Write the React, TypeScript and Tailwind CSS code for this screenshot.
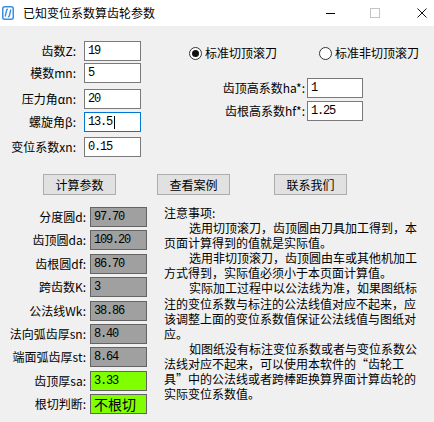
import React from "react";

const inputs = [
    { label: "齿数Z:", value: "19", mt: "mt-[15px]" },
    { label: "模数mn:", value: "5", mt: "mt-[2px]" },
    { label: "压力角αn:", value: "20", mt: "mt-[6px]" },
    { label: "螺旋角β:", value: "13.5", mt: "mt-[3px]", focus: true },
    { label: "变位系数xn:", value: "0.15", mt: "mt-[5px]" },
];

const outputs = [
    { label: "分度圆d:", value: "97.70" },
    { label: "齿顶圆da:", value: "109.20" },
    { label: "齿根圆df:", value: "86.70" },
    { label: "跨齿数K:", value: "3" },
    { label: "公法线Wk:", value: "38.86" },
    { label: "法向弧齿厚sn:", value: "8.40" },
    { label: "端面弧齿厚st:", value: "8.64" },
    { label: "齿顶厚sa:", value: "3.33", green: true },
    { label: "根切判断:", value: "不根切", green: true, cjk: true },
];

// each line of the notes, indent = paragraph start
const notes: { text: string; indent?: boolean }[] = [
    { text: "注意事项:" },
    { text: "选用切顶滚刀，齿顶圆由刀具加工得到，本", indent: true },
    { text: "页面计算得到的值就是实际值。" },
    { text: "选用非切顶滚刀，齿顶圆由车或其他机加工", indent: true },
    { text: "方式得到，实际值必须小于本页面计算值。" },
    { text: "实际加工过程中以公法线为准，如果图纸标", indent: true },
    { text: "注的变位系数与标注的公法线值对应不起来，应" },
    { text: "该调整上面的变位系数值保证公法线值与图纸对" },
    { text: "应。" },
    { text: "如图纸没有标注变位系数或者与变位系数公", indent: true },
    { text: "法线对应不起来，可以使用本软件的“齿轮工" },
    { text: "具”中的公法线或者跨棒距换算界面计算齿轮的" },
    { text: "实际变位系数值。" },
];

const mono = "font-['Liberation_Mono',monospace] text-[12px] tracking-[-1.2px]";

const Radio = ({ checked, label }: { checked?: boolean; label: string }) => (
    <div className="flex items-center">
        <div className="w-[13px] h-[13px] rounded-full border border-[#333] bg-white flex items-center justify-center">
            {checked && <div className="w-[7px] h-[7px] rounded-full bg-[#111]" />}
        </div>
        <span className="ml-[3px] text-[12px] leading-[16px]">{label}</span>
    </div>
);

const Btn = ({ label, className }: { label: string; className?: string }) => (
    <div className={`w-[73px] h-[21px] bg-[#e1e1e1] border border-[#adadad] flex items-center justify-center text-[12px] ${className ?? ""}`}>
        {label}
    </div>
);

export default function App() {
    return (
        <div className="w-[434px] h-[422px] overflow-hidden bg-[#f0f0f0] flex flex-col text-black font-['Noto_Sans_CJK_SC','Liberation_Sans',sans-serif]">
            {/* Title bar */}
            <div className="h-[26px] bg-white flex items-center shrink-0">
                <svg className="ml-[2px] mt-[-1px]" width="12" height="14" viewBox="0 0 12 14">
                    <rect x="0.75" y="0.75" width="10.5" height="12.5" rx="2" fill="#fff" stroke="#3a8ee6" strokeWidth="1.5" />
                    <path d="M3.2 10.5 L4.6 4.2 Q4.9 3.2 5.9 3.3" stroke="#3a8ee6" strokeWidth="1.4" fill="none" />
                    <path d="M6 10.7 Q7.1 10.8 7.4 9.8 L8.8 3.5" stroke="#3a8ee6" strokeWidth="1.4" fill="none" />
                </svg>
                <span className="ml-[9px] text-[12px] leading-[16px]">已知变位系数算齿轮参数</span>
                <div className="ml-auto w-[9px] h-px bg-black" />
                <div className="ml-[35px] w-[10px] h-[10px] border border-[#c4c4c4]" />
                <svg className="ml-[37px] mr-[7px]" width="10" height="10" viewBox="0 0 10 10">
                    <path d="M0.5 0.5 L9.5 9.5 M9.5 0.5 L0.5 9.5" stroke="#111" strokeWidth="1" />
                </svg>
            </div>

            {/* Input section */}
            <div className="h-[148px] flex shrink-0">
                <div className="flex flex-col">
                    {inputs.map(row => (
                        <div key={row.label} className={`flex items-center h-[20px] ${row.mt}`}>
                            <span className="w-[76px] text-right text-[12px] leading-[16px] whitespace-nowrap">{row.label}</span>
                            <div className={`ml-[8px] w-[57px] h-[20px] bg-white border flex items-center pl-[3px] ${row.focus ? "border-[#0078d7]" : "border-[#7a7a7a]"}`}>
                                <span className={mono}>{row.value}</span>
                                {row.focus && <div className="ml-[2px] w-px h-[13px] bg-black" />}
                            </div>
                        </div>
                    ))}
                </div>

                <div className="ml-[48px] flex flex-col">
                    <div className="mt-[19px] h-[16px] flex items-center">
                        <Radio checked label="标准切顶滚刀" />
                        <div className="ml-[42px]">
                            <Radio label="标准非切顶滚刀" />
                        </div>
                    </div>
                    <div className="mt-[17px] flex items-center h-[20px]">
                        <span className="w-[116px] text-right text-[12px] leading-[16px] whitespace-nowrap">齿顶高系数ha*:</span>
                        <div className="ml-[2px] w-[56px] h-[20px] bg-white border border-[#7a7a7a] flex items-center pl-[3px]">
                            <span className={mono}>1</span>
                        </div>
                    </div>
                    <div className="mt-[3px] flex items-center h-[20px]">
                        <span className="w-[116px] text-right text-[12px] leading-[16px] whitespace-nowrap">齿根高系数hf*:</span>
                        <div className="ml-[2px] w-[56px] h-[20px] bg-white border border-[#7a7a7a] flex items-center pl-[3px]">
                            <span className={mono}>1.25</span>
                        </div>
                    </div>
                </div>
            </div>

            {/* Buttons */}
            <div className="flex pl-[43px] shrink-0">
                <Btn label="计算参数" />
                <Btn label="查看案例" className="ml-[41px]" />
                <Btn label="联系我们" className="ml-[44px]" />
            </div>

            {/* Results + notes */}
            <div className="mt-[10px] flex">
                <div className="pt-[2px] flex flex-col gap-[3.375px]">
                    {outputs.map(row => (
                        <div key={row.label} className="flex items-center h-[20px]">
                            <span className="w-[86px] text-right text-[12px] leading-[16px] whitespace-nowrap">{row.label}</span>
                            <div className={`ml-[4px] w-[57px] h-[20px] border border-[#646464] flex items-center pl-[3px] ${row.green ? "bg-[#80ff00]" : "bg-[#a0a0a0]"}`}>
                                {row.cjk
                                    ? <span className="text-[14px] leading-[18px]">{row.value}</span>
                                    : <span className={mono}>{row.value}</span>}
                            </div>
                        </div>
                    ))}
                </div>

                <div className="ml-[17px] flex flex-col text-[12px] leading-[15.1px] whitespace-nowrap">
                    {notes.map((line, i) => (
                        <div key={i} className={line.indent ? "pl-[25px]" : ""}>{line.text}</div>
                    ))}
                </div>
            </div>
        </div>
    );
}
